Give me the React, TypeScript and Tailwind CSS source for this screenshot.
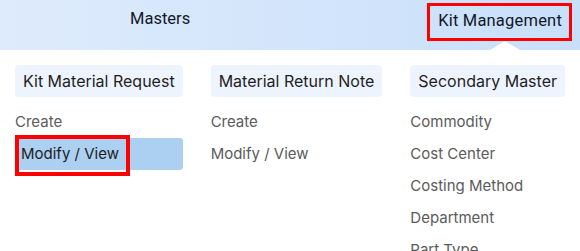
import React from "react";

type Section = {
    title: string
    items: string[]
    active?: string
}

const sections: Section[] = [
    {title: "Kit Material Request", items: ["Create", "Modify / View"], active: "Modify / View"},
    {title: "Material Return Note", items: ["Create", "Modify / View"]},
    {title: "Secondary Master", items: ["Commodity", "Cost Center", "Costing Method", "Department", "Part Type", "Unit"]},
]

function MenuItem({label, active}: { label: string, active: boolean }) {
    if (active) {
        return (
            <div className="relative h-8 flex items-center pl-[6px] bg-[#acd0f2] rounded-[3px] text-[#1d1d1d]">
                {label}
                <div className="absolute left-0 top-[-3px] w-[115px] h-[41px] border-[4px] border-[#ff0000]"></div>
            </div>
        )
    }
    return <div className="h-8 flex items-center text-[#5b5b5b]">{label}</div>
}

export default function App() {
    return (
        <div className="w-[580px] h-[251px] overflow-hidden bg-white font-['Inter',sans-serif]">
            <div className="relative h-[50px] flex items-start bg-gradient-to-r from-[#deebfc] to-[#c8dffa] font-['Roboto',Arial,sans-serif] text-[16.5px] text-[#111827]">
                <div className="ml-[130px] mt-[7px]">Masters</div>
                <div className="relative ml-auto mr-[8px] mt-[3px] h-[38px] flex items-center pl-[8px] pr-[7px] pb-[2px] border-[3px] border-[#ff0000] tracking-[0.2px]">
                    Kit Management
                </div>
                <div className="absolute left-[490px] bottom-0 w-0 h-0 border-l-[15px] border-r-[15px] border-b-[9px] border-l-transparent border-r-transparent border-b-white"></div>
            </div>

            <div className="flex gap-7 px-[15px] pt-[15px]">
                {sections.map(section => (
                    <div key={section.title} className="flex flex-col text-[15px]">
                        <div className="h-8 flex items-center px-2 bg-[#edf4fe] rounded text-[16px] text-[#1f1f1f] mb-[9px]">
                            {section.title}
                        </div>
                        {section.items.map(item => (
                            <MenuItem key={item} label={item} active={item === section.active}/>
                        ))}
                    </div>
                ))}
            </div>
        </div>
    )
}
